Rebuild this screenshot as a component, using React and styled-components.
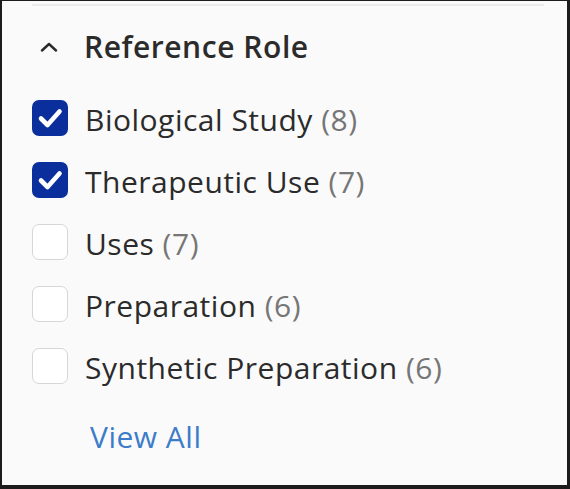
import React from 'react'
import styled, { createGlobalStyle } from 'styled-components'

const GlobalStyle = createGlobalStyle`
  html, body {
    margin: 0;
    padding: 0;
    background: #ffffff;
  }
`

const roles = [
  { label: 'Biological Study', count: 8, checked: true },
  { label: 'Therapeutic Use', count: 7, checked: true },
  { label: 'Uses', count: 7, checked: false },
  { label: 'Preparation', count: 6, checked: false },
  { label: 'Synthetic Preparation', count: 6, checked: false },
]

const ChevronUp = () => (
  <svg width="18" height="10" viewBox="0 0 18 10" fill="none">
    <path d="M2 8.5 L9 2 L16 8.5" stroke="#2b2b2b" strokeWidth="2.4" strokeLinecap="round" strokeLinejoin="round" />
  </svg>
)

const Check = () => (
  <svg width="36" height="36" viewBox="0 0 36 36" fill="none">
    <path d="M9 18.5 L15.5 25 L27.5 11.5" stroke="#ffffff" strokeWidth="4.6" strokeLinecap="round" strokeLinejoin="round" />
  </svg>
)

const App = () => {
  return (
    <>
      <GlobalStyle />
      <Frame>
        <Divider />
        <Heading>
          <ChevronUp />
          <HeadingText>Reference Role</HeadingText>
        </Heading>
        <List>
          {roles.map(role => (
            <Row key={role.label}>
              <Box checked={role.checked}>
                {role.checked && <Check />}
              </Box>
              <Label>
                {role.label} <Count>({role.count})</Count>
              </Label>
            </Row>
          ))}
        </List>
        <ViewAll href="#">View All</ViewAll>
      </Frame>
    </>
  )
}

const Frame = styled.div`
  box-sizing: border-box;
  width: 570px;
  height: 489px;
  border-style: solid;
  border-color: #1c1c1c;
  border-width: 1px 3px 4px 2px;
  background: #fafafa;
  font-family: "Open Sans", "Noto Sans", sans-serif;
  display: flex;
  flex-direction: column;
`

const Divider = styled.div`
  height: 2px;
  margin: 3px 23px 0 30px;
  background: #ebebeb;
`

const Heading = styled.div`
  display: flex;
  align-items: center;
  gap: 26px;
  margin-top: 22px;
  padding-left: 38px;
  height: 38px;
`

const HeadingText = styled.h2`
  margin: 0;
  font-size: 30px;
  font-weight: 600;
  letter-spacing: 0.55px;
  line-height: 38px;
  color: #2b2b2b;
`

const List = styled.div`
  display: flex;
  flex-direction: column;
  gap: 26px;
  margin-top: 34px;
  padding-left: 30px;
`

const Row = styled.label`
  display: flex;
  align-items: flex-start;
  gap: 17px;
  height: 36px;
`

const Box = styled.span`
  box-sizing: border-box;
  flex: none;
  width: 36px;
  height: 36px;
  border-radius: 7px;
  display: flex;
  align-items: center;
  justify-content: center;
  background: ${props => (props.checked ? '#0a2f9c' : '#ffffff')};
  border: ${props => (props.checked ? 'none' : '1.5px solid #d6d6d6')};
`

const Label = styled.span`
  padding-top: 2px;
  font-size: 30px;
  letter-spacing: 0.5px;
  line-height: 36px;
  color: #2b2b2b;
  white-space: nowrap;
`

const Count = styled.span`
  color: #767676;
`

const ViewAll = styled.a`
  margin-top: 35px;
  padding-left: 88px;
  font-size: 30px;
  letter-spacing: 0.5px;
  line-height: 36px;
  color: #3d7cc9;
  text-decoration: none;
`

export default App
